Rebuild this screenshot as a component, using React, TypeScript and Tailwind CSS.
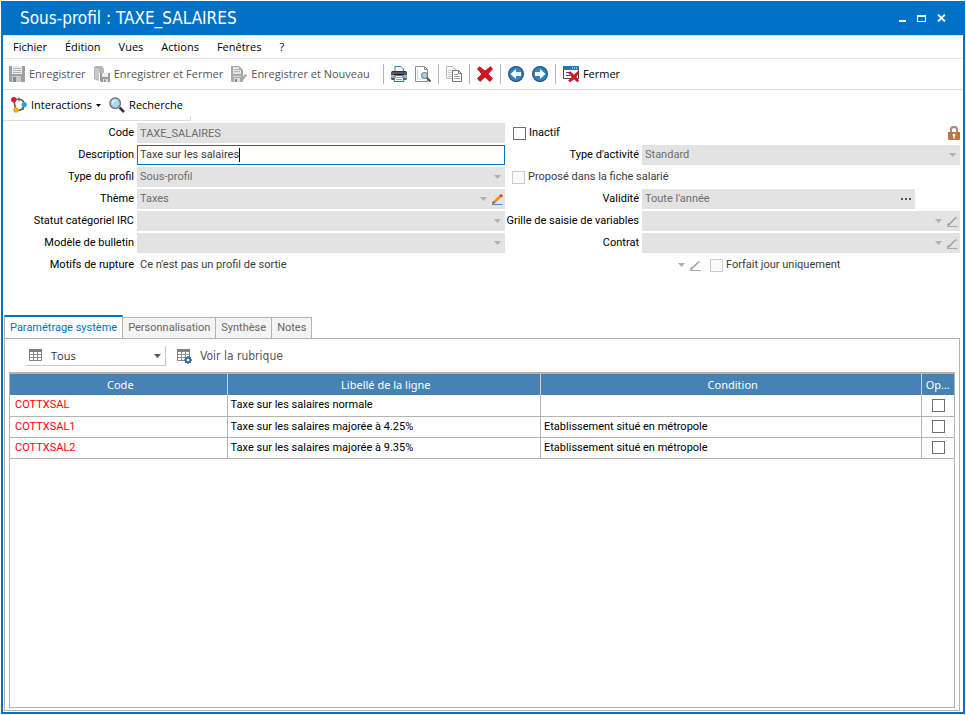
import { ReactNode, useState } from 'react';
import clsx from 'clsx';

type Line = {
  code: string;
  label: string;
  condition: string;
};

const LINES: Line[] = [
  { code: 'COTTXSAL', label: 'Taxe sur les salaires normale', condition: '' },
  { code: 'COTTXSAL1', label: 'Taxe sur les salaires majorée à 4.25%', condition: 'Etablissement situé en métropole' },
  { code: 'COTTXSAL2', label: 'Taxe sur les salaires majorée à 9.35%', condition: 'Etablissement situé en métropole' },
];

const MENUS = ['Fichier', 'Édition', 'Vues', 'Actions', 'Fenêtres', '?'];
const TABS = ['Paramétrage système', 'Personnalisation', 'Synthèse', 'Notes'];

const Icon = ({ children }: { children: ReactNode }) => (
  <svg viewBox="0 0 16 16" className="h-4 w-4 shrink-0" fill="none" aria-hidden="true">
    {children}
  </svg>
);

const SaveIcon = () => (
  <Icon>
    <path d="M0 0h16v16H1l-1-1z" fill="#a0a0a0" />
    <path d="M3 0h10v8H3z" fill="#ececec" />
    <path d="M4 2.500h8M4 4.500h8M4 6.500h8" stroke="#b5b5b5" />
    <path d="M3 10h9v6H3z" fill="#c9c9c9" />
    <path d="M4 11h3v5H4z" fill="#8a8a8a" />
  </Icon>
);

const SaveCloseIcon = () => (
  <Icon>
    <path d="M0 1l2-1h6l2 3v4H5v8L0 13z" fill="#b5b5b5" />
    <path d="M1 1.500l4 2V14l-4-2z" fill="#c9c9c9" />
    <path d="M6 7h10v9H7l-1-1z" fill="#9a9a9a" />
    <path d="M8 7h6v4H8z" fill="#ececec" />
    <path d="M9 13h5v3H9z" fill="#dadada" />
    <path d="M10 13.500h1.500V16H10z" fill="#8a8a8a" />
  </Icon>
);

const SaveNewIcon = () => (
  <Icon>
    <path d="M0 0h8l4 4v12H1l-1-1z" fill="#a8a8a8" />
    <path d="M2 1h6v3h2v4H2z" fill="#e3e3e3" />
    <path d="M3 3.500h5M3 5.500h6" stroke="#bababa" />
    <path d="M2 10h8v1H2zM3 12h6v4H3z" fill="#dedede" />
    <path d="M4 13h2v3H4z" fill="#858585" />
    <path d="M9 15.500l.5-2L14 8l2 1.500-4.500 5.500z" fill="#a8a8a8" />
  </Icon>
);

const PrintIcon = () => (
  <Icon>
    <path d="M4 5V.5h6L12.500 3v2" fill="#fff" stroke="#2581c0" />
    <path d="M1 5h14l1 1v7l-1 1H1l-1-1V6z" fill="#55585c" />
    <path d="M0 9h16v3H0z" fill="#a9adb1" />
    <path d="M1 5.500h14" stroke="#303336" />
    <path d="M3 8.500h10" stroke="#1f2224" />
    <path d="M4.500 9.500h7l1.500 6H3z" fill="#fff" stroke="#2581c0" />
    <path d="M5 11.500h6M5 13.500h6" stroke="#78b3dc" />
  </Icon>
);

const PreviewIcon = () => (
  <Icon>
    <path d="M.5.5h9l3 3v12H.5z" fill="#fff" stroke="#8c8c8c" />
    <path d="M9.500.5v3h3" stroke="#8c8c8c" />
    <path d="M2.500 3v10h6" stroke="#d8d8d8" />
    <path d="M11.500 11.500l4 4" stroke="#555" strokeWidth="2.200" />
    <circle cx="9.500" cy="9.500" r="3" fill="#a9d3ec" stroke="#6f8794" strokeWidth="1.200" />
  </Icon>
);

const CopyIcon = () => (
  <Icon>
    <path d="M.5.5h6l3 3v9h-9z" fill="#f6f6f6" stroke="#b9b9b9" />
    <path d="M2 4.500h5M2 6.500h5M2 8.500h5M2 10.500h4" stroke="#cfcfcf" />
    <path d="M6.500 4.500h6l3 3v8h-9z" fill="#fff" stroke="#777" />
    <path d="M12.500 4.500v3h3" stroke="#777" />
    <path d="M8 8.500h4M8 10.500h6M8 12.500h6" stroke="#a0a0a0" />
  </Icon>
);

const DeleteIcon = () => (
  <Icon>
    <path
      d="M2.500.8L8 5 13.500.8 15.500 3 11 8l4.500 4.500-2.500 3L8 11l-5 4.500-2.500-3L5 8 .5 3z"
      fill="#d9141e"
      stroke="#a30f17"
      strokeWidth=".8"
    />
  </Icon>
);

const ArrowIcon = ({ right = false }: { right?: boolean }) => (
  <Icon>
    <circle cx="8" cy="8" r="7.400" fill="#2a86c8" stroke="#2b5573" strokeWidth="1.200" />
    <path
      d={right ? 'M3 6h5V3l5.500 5L8 13v-3H3z' : 'M13 6H8V3L2.500 8 8 13v-3h5z'}
      fill="#fff"
    />
  </Icon>
);

const CloseWindowIcon = () => (
  <Icon>
    <path d="M.5.5h15v12H.5z" fill="#fff" stroke="#4d4d4d" />
    <path d="M0 0h16v4H0z" fill="#2a76ac" />
    <path d="M9 2h1M11 2h1M13 2h1" stroke="#fff" />
    <path d="M3 6.500h5M3 9.500h4" stroke="#4d4d4d" />
    <path d="M7 5.500L11 9l3.500-3.500L16 7l-3 4 3 3.500-1.500 1.500L11 13l-4 3-1.500-1.500L9 11 5.500 7z" fill="#d9141e" stroke="#a81720" strokeWidth=".5" />
  </Icon>
);

const InteractionsIcon = () => (
  <Icon>
    <path d="M5 2.500c4-.5 7.500 0 8 4M3 4l1.500 8M6 13.500c4 0 6.500-2 7.500-5" stroke="#5a5a5a" strokeWidth="1.500" />
    <path d="M8 .5v4M11 10l1.500 3" stroke="#5a5a5a" />
    <circle cx="2.800" cy="2.800" r="2.700" fill="#e21737" />
    <circle cx="13.200" cy="7.500" r="2.600" fill="#2aa0dc" />
    <circle cx="5" cy="13" r="2.700" fill="#f1ab15" />
  </Icon>
);

const SearchIcon = () => (
  <Icon>
    <path d="M10.500 10.500l4.500 4.500" stroke="#343434" strokeWidth="2.500" />
    <circle cx="6.200" cy="6.200" r="5.200" fill="#a9d8f2" stroke="#777" strokeWidth="1.500" />
    <path d="M3.500 6.500c0-2 1-3 3-3" stroke="#e8f6fd" strokeWidth="1.500" />
  </Icon>
);

const LockIcon = () => (
  <svg viewBox="0 0 12 14" className="h-3.5 w-3" fill="none" aria-hidden="true">
    <path d="M3 7V3.500c0-3.500 6-3.500 6 0V7" stroke="#b58a6c" strokeWidth="2" />
    <path d="M0 6h12v7l-1 1H1l-1-1z" fill="#c07442" />
    <circle cx="6" cy="9" r="1.500" fill="#fff" />
    <path d="M5.300 9h1.400v3.500H5.300z" fill="#fff" />
  </svg>
);

const PencilIcon = ({ colored = false }: { colored?: boolean }) => (
  <svg viewBox="0 0 11 11" className="h-[11px] w-[11px] shrink-0" fill="none" aria-hidden="true">
    <path d="M0 10.500h10.500" stroke={colored ? '#3b93cf' : '#a8a8a8'} />
    <path d="M2 8.500L8.500 2" stroke={colored ? '#f08c1c' : '#9d9d9d'} strokeWidth={colored ? 2.5 : 1.5} />
    <path d="M8.300.8l2 2" stroke={colored ? '#d8274a' : '#9d9d9d'} strokeWidth={colored ? 2 : 1} />
    <path d="M0 10l1-3 2 2z" fill={colored ? '#6b5037' : '#8d8d8d'} />
  </svg>
);

const GridIcon = ({ gear = false }: { gear?: boolean }) => (
  <Icon>
    <path d="M1.500 1.500h12v11h-12z" fill="#fff" stroke="#808080" />
    <path d="M1 1h13v3H1z" fill="#808080" />
    <path d="M2 6.500h11M2 9.500h11M5.500 4v9M9.500 4v9" stroke="#8d8d8d" />
    {gear && (
      <>
        <circle cx="12" cy="12" r="3.200" fill="#2b72ab" />
        <path d="M12 8v8M8 12h8M9.200 9.200l5.600 5.600M14.800 9.200l-5.600 5.600" stroke="#2b72ab" strokeWidth="1.500" />
        <circle cx="12" cy="12" r="1.300" fill="#fff" />
      </>
    )}
  </Icon>
);

const Arrow = ({ dark = false }: { dark?: boolean }) => (
  <svg viewBox="0 0 7 4" className={clsx('h-1 w-[7px] shrink-0', dark ? 'text-[#555]' : 'text-[#b0b0b0]')} aria-hidden="true">
    <path d="M0 0h7L3.500 4z" fill="currentColor" />
  </svg>
);

const Separator = () => <span className="h-5 w-px bg-[#b4b4b4]" />;

const Label = ({ htmlFor, children }: { htmlFor: string; children: ReactNode }) => (
  <label htmlFor={htmlFor} className="pr-[3px] text-right whitespace-nowrap">
    {children}
  </label>
);

type SelectFieldProps = {
  id: string;
  value?: string;
  pencil?: 'gray' | 'color';
  plain?: boolean;
};

const SelectField = ({ id, value = '', pencil, plain = false }: SelectFieldProps) => (
  <div className={clsx('relative h-5', plain ? 'bg-white text-[#3c3c3c]' : 'bg-[#e3e3e3] text-[#6d6d6d]')}>
    <select id={id} disabled className="h-5 w-full appearance-none bg-transparent px-[3px] opacity-100">
      <option>{value}</option>
    </select>
    <span className={clsx('pointer-events-none absolute inset-y-0 flex items-center gap-[5px]', pencil ? 'right-0.5' : 'right-1')}>
      <Arrow />
      {pencil && <PencilIcon colored={pencil === 'color'} />}
    </span>
  </div>
);

const CheckField = ({ label, disabled = false }: { label: string; disabled?: boolean }) => (
  <label className={clsx('flex h-5 items-center gap-[3px] whitespace-nowrap', disabled && 'text-[#3c3c3c]')}>
    <input
      type="checkbox"
      disabled={disabled}
      className="h-[13px] w-[13px] appearance-none border border-[#707070] bg-white checked:bg-[#0072c6] disabled:border-[#cccccc] disabled:bg-[#fafafa]"
    />
    {label}
  </label>
);

const App = () => {
  const [description, setDescription] = useState('Taxe sur les salaires');
  const [activeTab, setActiveTab] = useState(TABS[0]);

  return (
    <div className="min-h-screen bg-white p-px font-['Open_Sans',sans-serif] text-[11px] leading-4 text-black">
      <div className="flex min-h-[calc(100vh-2px)] flex-col border-2 border-t-0 border-[#0072c6]">
        <header className="flex h-[34px] items-center justify-between bg-[#0072c6] pr-[17px] pl-[17px] text-white">
          <h1 className="font-['DejaVu_Sans_Condensed','Open_Sans',sans-serif] text-[17px]">Sous-profil : TAXE_SALAIRES</h1>
          <div className="flex items-center gap-[11px]">
            <button type="button" aria-label="Réduire" className="flex h-2 w-[7px] items-end">
              <span className="h-0.5 w-[7px] bg-white" />
            </button>
            <button type="button" aria-label="Agrandir" className="h-[7px] w-[9px] border border-t-2 border-white" />
            <button type="button" aria-label="Fermer la fenêtre">
              <svg viewBox="0 0 9 8" className="h-2 w-[9px]" fill="none">
                <path d="M1 .5l7 7M8 .5l-7 7" stroke="#fff" strokeWidth="1.800" />
              </svg>
            </button>
          </div>
        </header>

        <nav className="flex h-6 items-center gap-[18px] border-y border-[#e5e5e5] px-2.5">
          {MENUS.map((menu) => (
            <button key={menu} type="button">
              {menu}
            </button>
          ))}
        </nav>

        <div className="flex h-[31px] items-center border-b border-[#dcdcdc] px-1.5 whitespace-nowrap">
          <div className="flex items-center gap-2 pr-[13px] text-[#555]">
            <button type="button" disabled className="flex items-center gap-1">
              <SaveIcon />
              Enregistrer
            </button>
            <button type="button" disabled className="flex items-center gap-1">
              <SaveCloseIcon />
              Enregistrer et Fermer
            </button>
            <button type="button" disabled className="flex items-center gap-1">
              <SaveNewIcon />
              Enregistrer et Nouveau
            </button>
          </div>
          <div className="flex items-center gap-[7px]">
            <Separator />
            <div className="flex gap-2">
              <button type="button" aria-label="Imprimer">
                <PrintIcon />
              </button>
              <button type="button" aria-label="Aperçu">
                <PreviewIcon />
              </button>
            </div>
            <Separator />
            <button type="button" aria-label="Copier">
              <CopyIcon />
            </button>
            <Separator />
            <button type="button" aria-label="Supprimer">
              <DeleteIcon />
            </button>
            <Separator />
            <div className="flex gap-2">
              <button type="button" aria-label="Précédent">
                <ArrowIcon />
              </button>
              <button type="button" aria-label="Suivant">
                <ArrowIcon right />
              </button>
            </div>
            <Separator />
            <button type="button" className="flex items-center gap-1">
              <CloseWindowIcon />
              Fermer
            </button>
          </div>
        </div>

        <div className="flex h-[31px] w-[188px] flex-col border-b border-[#dcdcdc]">
          <div className="flex flex-1 items-center gap-2 px-2 whitespace-nowrap">
            <button type="button" className="flex items-center gap-1">
              <InteractionsIcon />
              Interactions
              <svg viewBox="0 0 5 3" className="h-[3px] w-[5px]" aria-hidden="true">
                <path d="M0 0h5L2.500 3z" fill="#000" />
              </svg>
            </button>
            <button type="button" className="flex items-center gap-1">
              <SearchIcon />
              Recherche
            </button>
          </div>
          <span className="-mt-1 h-1 w-px self-end bg-[#dcdcdc]" />
        </div>

        <form className="grid grid-cols-[134px_368fr_137px_318fr] items-center gap-y-0.5 pt-0.5 pr-[3px] font-['Roboto',sans-serif]">
          <Label htmlFor="code">Code</Label>
          <input id="code" readOnly value="TAXE_SALAIRES" className="h-5 min-w-0 bg-[#e3e3e3] px-[3px] text-[#6d6d6d]" />
          <div className="col-span-2 flex items-center justify-between pl-2">
            <CheckField label="Inactif" />
            <LockIcon />
          </div>

          <Label htmlFor="description">Description</Label>
          <div className="flex h-5 items-center border border-[#0072c6] pl-0.5">
            <input
              id="description"
              value={description}
              onChange={(event) => setDescription(event.target.value)}
              className="field-sizing-content text-[#3c3c3c] outline-none"
            />
            <span className="h-3.5 w-px bg-black" />
          </div>
          <Label htmlFor="activite">Type d'activité</Label>
          <SelectField id="activite" value="Standard" />

          <Label htmlFor="type">Type du profil</Label>
          <SelectField id="type" value="Sous-profil" />
          <div className="col-span-2 pl-[7px]">
            <CheckField label="Proposé dans la fiche salarié" disabled />
          </div>

          <Label htmlFor="theme">Thème</Label>
          <SelectField id="theme" value="Taxes" pencil="color" />
          <Label htmlFor="validite">Validité</Label>
          <div className="mr-[45px] flex h-5 items-center bg-[#e3e3e3] pr-1 text-[#6d6d6d]">
            <input id="validite" readOnly value="Toute l'année" className="min-w-0 flex-1 px-[3px]" />
            <button type="button" aria-label="Choisir la validité" className="flex gap-0.5">
              <span className="h-0.5 w-0.5 bg-[#555]" />
              <span className="h-0.5 w-0.5 bg-[#555]" />
              <span className="h-0.5 w-0.5 bg-[#555]" />
            </button>
          </div>

          <Label htmlFor="statut">Statut catégoriel IRC</Label>
          <SelectField id="statut" />
          <Label htmlFor="grille">Grille de saisie de variables</Label>
          <SelectField id="grille" pencil="gray" />

          <Label htmlFor="modele">Modèle de bulletin</Label>
          <SelectField id="modele" />
          <Label htmlFor="contrat">Contrat</Label>
          <SelectField id="contrat" pencil="gray" />

          <Label htmlFor="motifs">Motifs de rupture</Label>
          <div className="col-span-3 grid grid-cols-[566fr_250fr] gap-[7px]">
            <SelectField id="motifs" value="Ce n'est pas un profil de sortie" pencil="gray" plain />
            <CheckField label="Forfait jour uniquement" disabled />
          </div>
        </form>

        <div className="flex flex-1 flex-col px-px pt-10 pr-[3px] pb-px font-['Roboto',sans-serif]">
          <div role="tablist" className="flex items-end">
            {TABS.map((tab) => (
              <button
                key={tab}
                type="button"
                role="tab"
                aria-selected={tab === activeTab}
                onClick={() => setActiveTab(tab)}
                className={clsx(
                  'border-[#b4b4b4] whitespace-nowrap',
                  tab === activeTab
                    ? '-mb-px h-6 border-t-2 border-r border-l border-t-[#0072c6] bg-white px-[5px] text-[#0072c6]'
                    : 'h-[21px] border-t border-r bg-[#f4f4f4] px-[5px] text-[#666]'
                )}
              >
                {tab}
              </button>
            ))}
          </div>
          <section className="flex flex-1 flex-col border border-[#b4b4b4] px-1 pt-[7px] pb-0.5">
            <div className="flex h-[26px] items-start pl-[17px]">
              <label className="relative flex h-5 w-[140px] items-center border-r border-b border-[#c6c6c6] pl-0.5">
                <GridIcon />
                <select aria-label="Filtre" className="w-full appearance-none pl-[7px] font-['Open_Sans',sans-serif] text-[#333]">
                  <option>Tous</option>
                </select>
                <span className="pointer-events-none absolute right-1">
                  <Arrow dark />
                </span>
              </label>
              <button type="button" className="ml-2.5 flex h-5 items-center gap-2 pr-1 font-['DejaVu_Sans_Condensed','Open_Sans',sans-serif] text-[12px] text-[#555]">
                <GridIcon gear />
                Voir la rubrique
              </button>
            </div>
            <div className="flex-1 border border-t-2 border-[#b4b4b4]">
              <table className="w-full table-fixed border-collapse">
                <colgroup>
                  <col className="w-[23%]" />
                  <col className="w-[33.2%]" />
                  <col />
                  <col className="w-[33px]" />
                </colgroup>
                <thead>
                  <tr className="h-[21px] bg-[#4682b4] font-['Noto_Sans',sans-serif] text-white">
                    <th className="border-r border-[#d0d0d0] pl-1 font-normal">Code</th>
                    <th className="border-r border-[#d0d0d0] pl-1 font-normal">Libellé de la ligne</th>
                    <th className="border-r border-[#d0d0d0] pl-1 font-normal">Condition</th>
                    <th className="font-normal">Op…</th>
                  </tr>
                </thead>
                <tbody>
                  {LINES.map((line) => (
                    <tr key={line.code} className="h-[21px] border-b border-[#b4b4b4]">
                      <td className="border-r border-[#b4b4b4] px-[5px] text-[#ff0000]">{line.code}</td>
                      <td className="border-r border-[#b4b4b4] px-[3px]">{line.label}</td>
                      <td className="border-r border-[#b4b4b4] px-[3px]">{line.condition}</td>
                      <td className="pl-0.5">
                        <input
                          type="checkbox"
                          aria-label={`Option ${line.code}`}
                          className="mx-auto block h-[13px] w-[13px] appearance-none border border-[#707070] bg-white checked:bg-[#0072c6]"
                        />
                      </td>
                    </tr>
                  ))}
                </tbody>
              </table>
            </div>
          </section>
        </div>
      </div>
    </div>
  );
};

export default App;
